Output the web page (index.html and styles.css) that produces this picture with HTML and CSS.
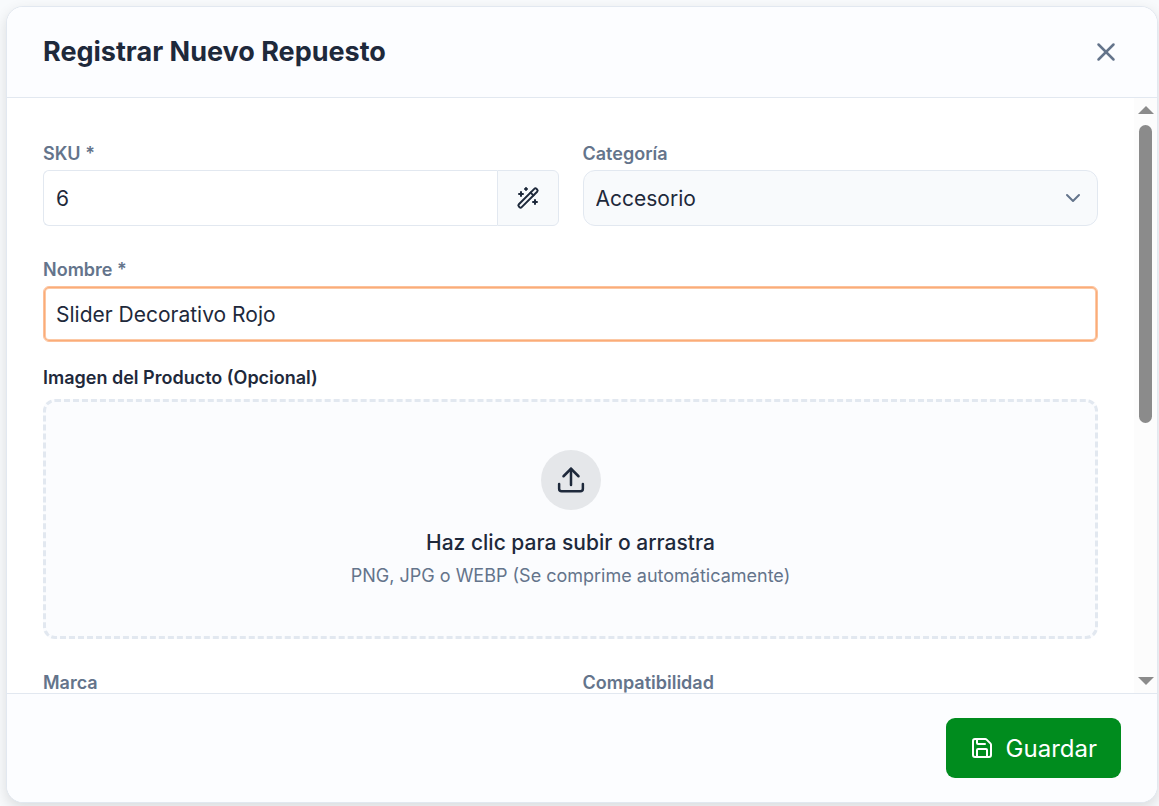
FILE: index.html
```html
<!DOCTYPE html>
<html lang="es">
<head>
  <meta charset="UTF-8">
  <meta name="viewport" content="width=device-width, initial-scale=1.0">
  <title>Registrar Nuevo Repuesto</title>
  <link rel="stylesheet" href="styles.css">
</head>
<body>

  <form class="modal">
    <header class="modal-header">
      <h1 class="modal-title">Registrar Nuevo Repuesto</h1>
      <button type="button" class="btn-close" aria-label="Cerrar">
        <svg class="icon" width="30" height="30" viewBox="0 0 24 24"><path d="M18 6 6 18"/><path d="m6 6 12 12"/></svg>
      </button>
    </header>

    <div class="modal-main">
      <div class="modal-body">
        <div class="form-row">
          <div class="field">
            <label class="label" for="sku">SKU *</label>
            <div class="input-group">
              <input class="input" type="text" id="sku" value="6">
              <button type="button" class="btn-addon" aria-label="Generar SKU">
                <svg class="icon" width="24" height="24" viewBox="0 0 24 24">
                  <rect x="-2" y="-12.5" width="4" height="25" rx="1.6" transform="translate(12 12) rotate(45)"/>
                  <path d="m14.6 6.6 2.8 2.8"/>
                  <path d="M5 6v4M3 8h4"/>
                  <path d="M10 2v2M9 3h2"/>
                  <path d="M19 14v4M17 16h4"/>
                </svg>
              </button>
            </div>
          </div>
          <div class="field">
            <label class="label" for="categoria">Categoría</label>
            <div class="select-wrap">
              <select class="select" id="categoria">
                <option>Accesorio</option>
              </select>
              <svg class="icon select-arrow" width="24" height="24" viewBox="0 0 24 24"><path d="m6 9 6 6 6-6"/></svg>
            </div>
          </div>
        </div>

        <div class="field">
          <label class="label" for="nombre">Nombre *</label>
          <input class="input input-active" type="text" id="nombre" value="Slider Decorativo Rojo">
        </div>

        <div class="field field-image">
          <label class="label label-dark" for="imagen">Imagen del Producto (Opcional)</label>
          <label class="dropzone" for="imagen">
            <input class="file-input" type="file" id="imagen" accept=".png,.jpg,.webp">
            <span class="upload-icon">
              <svg class="icon" width="30" height="30" viewBox="0 0 24 24"><path d="M2.5 15.2V19a2 2 0 0 0 2 2h15a2 2 0 0 0 2-2v-3.8"/><path d="m18 9-6-6-6 6"/><path d="M12 3v13"/></svg>
            </span>
            <span class="dropzone-title">Haz clic para subir o arrastra</span>
            <span class="dropzone-hint">PNG, JPG o WEBP (Se comprime automáticamente)</span>
          </label>
        </div>

        <div class="form-row">
          <div class="field">
            <label class="label" for="marca">Marca</label>
            <input class="input" type="text" id="marca">
          </div>
          <div class="field">
            <label class="label" for="compatibilidad">Compatibilidad</label>
            <input class="input" type="text" id="compatibilidad">
          </div>
        </div>
      </div>

      <div class="scrollbar" aria-hidden="true">
        <span class="arrow arrow-up"></span>
        <div class="track"><div class="thumb"></div></div>
        <span class="arrow arrow-down"></span>
      </div>
    </div>

    <footer class="modal-footer">
      <button type="button" class="btn-save">
        <svg class="icon" width="24" height="24" viewBox="0 0 24 24"><path d="M15.2 3a2 2 0 0 1 1.4.6l3.800 3.800a2 2 0 0 1 .6 1.400V19a2 2 0 0 1-2 2H5a2 2 0 0 1-2-2V5a2 2 0 0 1 2-2z"/><path d="M17 21v-7a1 1 0 0 0-1-1H8a1 1 0 0 0-1 1v7"/><path d="M7 3v4a1 1 0 0 0 1 1h7"/></svg>
        Guardar
      </button>
    </footer>
  </form>

</body>
</html>
```
FILE: styles.css
```css
* {
  box-sizing: border-box;
}

body {
  margin: 0;
  padding: 6px 1px 3px 6px;
  height: 100vh;
  display: flex;
  background-color: #f8fafc;
  font-family: Inter, "Liberation Sans", sans-serif;
  color: #1e293b;
}

button, input, select {
  font-family: inherit;
  color: inherit;
}

.icon {
  fill: none;
  stroke: currentColor;
  stroke-width: 2;
  stroke-linecap: round;
  stroke-linejoin: round;
}

.modal {
  flex: 1;
  min-width: 0;
  display: flex;
  flex-direction: column;
  background-color: #fff;
  border: 1px solid #e2e8f0;
  border-radius: 17px;
  box-shadow: 0 5px 14px rgba(0, 0, 0, 0.12);
  overflow: hidden;
}

.modal-header {
  display: flex;
  justify-content: space-between;
  align-items: center;
  padding: 24px 36px;
  background-color: #fcfdff;
  border-bottom: 1px solid #e2e8f0;
}

.modal-title {
  margin: 0;
  font-size: 27px;
  line-height: 42px;
  font-weight: 700;
}

.btn-close {
  display: flex;
  padding: 0;
  border: none;
  background: none;
  color: #64748b;
  cursor: pointer;
}

.modal-main {
  flex: 1;
  min-height: 0;
  display: flex;
}

.modal-body {
  flex: 1;
  min-width: 0;
  display: flex;
  flex-direction: column;
  gap: 32px;
  padding: 44px 36px;
  overflow-y: auto;
  scrollbar-width: none;
}

.form-row {
  display: grid;
  grid-template-columns: 1fr 1fr;
  gap: 24px;
}

.field {
  display: flex;
  flex-direction: column;
  gap: 4px;
}

.field-image {
  margin-top: -8px;
  gap: 9px;
}

.label {
  font-size: 18px;
  line-height: 24px;
  font-weight: 600;
  color: #64748b;
}

.label-dark {
  color: #1e293b;
}

.input {
  width: 100%;
  min-width: 0;
  height: 56px;
  padding: 0 12px;
  border: 1px solid #e2e8f0;
  border-radius: 6px;
  background-color: #fff;
  font-size: 21px;
  outline: none;
}

.input-active {
  border-color: #fcc19a;
  box-shadow: inset 0 0 0 1px #fbac78, inset 0 0 0 2px #fcc9a6;
}

.input-group {
  display: flex;
}

.input-group .input {
  border-right: none;
  border-radius: 6px 0 0 6px;
}

.btn-addon {
  flex: none;
  display: flex;
  justify-content: center;
  align-items: center;
  width: 62px;
  padding: 0;
  border: 1px solid #e2e8f0;
  border-radius: 0 6px 6px 0;
  background-color: #f8fafc;
  cursor: pointer;
}

.select-wrap {
  display: grid;
  align-items: center;
}

.select {
  grid-area: 1 / 1;
  appearance: none;
  width: 100%;
  height: 56px;
  padding: 0 48px 0 12px;
  border: 1px solid #e2e8f0;
  border-radius: 12px;
  background-color: #f8fafc;
  font-size: 21px;
}

.select-arrow {
  grid-area: 1 / 1;
  justify-self: end;
  margin-right: 13px;
  color: #64748b;
  pointer-events: none;
}

.dropzone {
  display: flex;
  flex-direction: column;
  align-items: center;
  padding: 48px 24px 47px;
  border: 3px dashed #e2e8f0;
  border-radius: 12px;
  background-color: #fbfcfe;
  cursor: pointer;
}

.file-input {
  display: none;
}

.upload-icon {
  display: flex;
  justify-content: center;
  align-items: center;
  width: 60px;
  height: 60px;
  margin-bottom: 17px;
  border-radius: 50%;
  background-color: #e5e7ea;
}

.dropzone-title {
  font-size: 21px;
  line-height: 32px;
  font-weight: 500;
}

.dropzone-hint {
  margin-top: 4px;
  font-size: 18px;
  line-height: 26px;
  color: #64748b;
}

.scrollbar {
  flex: none;
  display: flex;
  flex-direction: column;
  align-items: center;
  gap: 11px;
  width: 23px;
  padding: 8px 0;
  background-color: #fcfcfc;
}

.arrow {
  border: 8px solid transparent;
}

.arrow-up {
  border-top: none;
  border-bottom-color: #8b8b8b;
}

.arrow-down {
  border-bottom: none;
  border-top-color: #8b8b8b;
}

.track {
  flex: 1;
  width: 13px;
}

.thumb {
  height: 55%;
  border-radius: 7px;
  background-color: #8b8b8b;
}

.modal-footer {
  display: flex;
  justify-content: flex-end;
  padding: 24px 36px;
  background-color: #fcfdff;
  border-top: 1px solid #e2e8f0;
}

.btn-save {
  display: flex;
  align-items: center;
  gap: 12px;
  height: 60px;
  padding: 0 24px;
  border: none;
  border-radius: 9px;
  background-color: #008c1e;
  color: #fff;
  font-size: 24px;
  cursor: pointer;
}
```
